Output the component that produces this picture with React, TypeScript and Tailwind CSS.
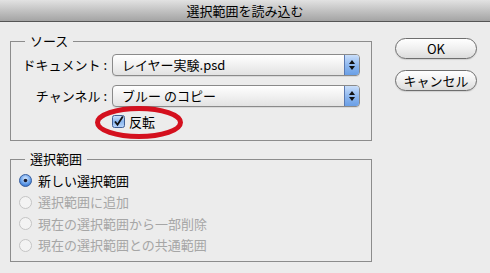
import type { ReactNode } from 'react';

const font = { fontFamily: '"Noto Sans CJK JP", "DejaVu Sans", sans-serif' };

const Popup = ({ value }: { value: string }) => (
  <div className="flex h-[22px] rounded-[4px] border border-[#8a8a8a] bg-gradient-to-b from-[#ffffff] via-[#f1f1f1] to-[#e2e2e2] shadow-[0_1px_0_rgba(0,0,0,0.08)]">
    <div className="flex-1 pl-[9px] text-[13px] leading-[20px] text-black">{value}</div>
    <div className="flex w-[15px] flex-col items-center justify-center gap-[2px] rounded-r-[3px] border-l border-[#5b79b0] bg-gradient-to-b from-[#c9defa] via-[#8fb8ef] to-[#6a9fe6]">
      <svg width="6" height="4" viewBox="0 0 6 4">
        <polygon points="3,0 6,4 0,4" fill="#111" />
      </svg>
      <svg width="6" height="4" viewBox="0 0 6 4">
        <polygon points="0,0 6,0 3,4" fill="#111" />
      </svg>
    </div>
  </div>
);

const Group = ({ title, children }: { title: string; children: ReactNode }) => (
  <fieldset className="border border-[#8c8c8c] p-0">
    <legend className="ml-[14px] px-[5px] text-[13px] leading-[16px] text-black">{title}</legend>
    {children}
  </fieldset>
);

const Radio = ({ label, on }: { label: string; on?: boolean }) => (
  <div className="flex h-[21.5px] items-center gap-[6px]">
    {on ? (
      <svg width="13" height="13" viewBox="0 0 13 13">
        <defs>
          <radialGradient id="rOn" cx="50%" cy="35%" r="65%">
            <stop offset="0%" stopColor="#d7e8ff" />
            <stop offset="60%" stopColor="#6ea5ec" />
            <stop offset="100%" stopColor="#2f6fcc" />
          </radialGradient>
        </defs>
        <circle cx="6.5" cy="6.5" r="6" fill="url(#rOn)" stroke="#3a5f9e" strokeWidth="1" />
        <circle cx="6.5" cy="6.5" r="1.8" fill="#1a1a2a" />
      </svg>
    ) : (
      <svg width="13" height="13" viewBox="0 0 13 13">
        <circle cx="6.5" cy="6.5" r="6" fill="#f3f3f3" stroke="#c4c4c4" strokeWidth="1" />
      </svg>
    )}
    <span className={`text-[13px] leading-[16px] ${on ? 'text-black' : 'text-[#a6a6a6]'}`}>{label}</span>
  </div>
);

const Button = ({ label }: { label: string }) => (
  <div className="flex h-[21px] w-[82px] items-center justify-center rounded-full border border-[#6e6e6e] bg-gradient-to-b from-[#ffffff] via-[#f0f0f0] to-[#dcdcdc] text-[13px] leading-[16px] text-black shadow-[0_1px_1px_rgba(0,0,0,0.12)]">
    {label}
  </div>
);

export default function App() {
  return (
    <div className="h-[273px] w-[490px] overflow-hidden bg-[#ececec]" style={font}>
      <div className="h-[22px] border-b border-[#555555] bg-gradient-to-b from-[#e2e2e2] to-[#a4a4a4] text-center text-[13px] leading-[21px] text-black">
        選択範囲を読み込む
      </div>

      <div className="flex px-[10px]">
        <div className="w-[362px]">
          <div className="mt-[11px]">
            <Group title="ソース">
              <div className="pb-[12px] pr-[11px] pt-[5px]">
                <div className="grid grid-cols-[96px_1fr] items-center gap-x-[5px] gap-y-[9px]">
                  <div className="text-right text-[13px] leading-[16px] text-black">ドキュメント :</div>
                  <Popup value="レイヤー実験.psd" />
                  <div className="text-right text-[13px] leading-[16px] text-black">チャンネル :</div>
                  <Popup value="ブルー のコピー" />
                </div>
                <div className="mt-[8px] flex h-[13px] pl-[101px]">
                  <div className="relative flex items-center gap-[4px]">
                    <svg width="13" height="13" viewBox="0 0 13 13">
                      <defs>
                        <linearGradient id="cb" x1="0" y1="0" x2="0" y2="1">
                          <stop offset="0%" stopColor="#d3e4fb" />
                          <stop offset="50%" stopColor="#8ab6ee" />
                          <stop offset="100%" stopColor="#b9d6fb" />
                        </linearGradient>
                      </defs>
                      <rect x="0.5" y="0.5" width="12" height="12" rx="2" fill="url(#cb)" stroke="#3f5f95" />
                      <path d="M3 6.5 L5.5 9.8 L10.8 1.5" fill="none" stroke="#111" strokeWidth="1.8" />
                    </svg>
                    <span className="text-[13px] leading-[16px] text-black">反転</span>
                    <svg
                      className="pointer-events-none absolute left-[-17px] top-[-9px]"
                      width="88"
                      height="33"
                      viewBox="0 0 88 33"
                    >
                      <ellipse cx="44" cy="16.5" rx="41.5" ry="14" fill="none" stroke="#d4101e" strokeWidth="5" />
                    </svg>
                  </div>
                </div>
              </div>
            </Group>
          </div>

          <div className="mt-[10px]">
            <Group title="選択範囲">
              <div className="pb-[5px] pl-[8px] pt-[3px]">
                <Radio label="新しい選択範囲" on />
                <Radio label="選択範囲に追加" />
                <Radio label="現在の選択範囲から一部削除" />
                <Radio label="現在の選択範囲との共通範囲" />
              </div>
            </Group>
          </div>
        </div>

        <div className="ml-[23px] mt-[16px] flex flex-col gap-[11px]">
          <Button label="OK" />
          <Button label="キャンセル" />
        </div>
      </div>
    </div>
  );
}
